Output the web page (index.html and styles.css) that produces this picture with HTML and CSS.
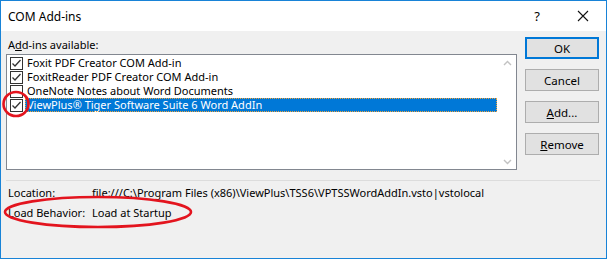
FILE: index.html
```html
<!DOCTYPE html>
<html lang="en">
<head>
  <meta charset="UTF-8" />
  <title>COM Add-ins</title>
  <link rel="stylesheet" href="styles.css" />
</head>
<body>

<div class="window">
  <!-- Title bar -->
  <div class="titlebar">
    <span class="title">COM Add-ins</span>
    <span class="caption-btn">?</span>
    <span class="caption-btn close">
      <svg width="12" height="12" viewBox="0 0 12 12"><path d="M1 1 L11 11 M11 1 L1 11" stroke="#111" stroke-width="1.1" fill="none"/></svg>
    </span>
  </div>

  <div class="content">
    <div class="left">
      <div class="label">A<u>d</u>d-ins available:</div>
      <div class="listbox">
        <div class="rows">
          <div class="row">
            <span class="check checked"></span>
            <span class="name">Foxit PDF Creator COM Add-in</span>
          </div>
          <div class="row">
            <span class="check checked"></span>
            <span class="name">FoxitReader PDF Creator COM Add-in</span>
          </div>
          <div class="row">
            <span class="check"></span>
            <span class="name">OneNote Notes about Word Documents</span>
          </div>
          <div class="row">
            <span class="check checked"></span>
            <span class="name selected">ViewPlus® Tiger Software Suite 6 Word AddIn</span>
          </div>
        </div>
        <div class="scrollbar">
          <svg width="9" height="6" viewBox="0 0 9 6"><path d="M1 5 L4.5 1.5 L8 5" stroke="#c2c2c2" stroke-width="1.4" fill="none"/></svg>
          <svg width="9" height="6" viewBox="0 0 9 6"><path d="M1 1 L4.5 4.5 L8 1" stroke="#c2c2c2" stroke-width="1.4" fill="none"/></svg>
        </div>
      </div>
    </div>

    <div class="buttons">
      <button class="btn default">OK</button>
      <button class="btn">Cancel</button>
      <button class="btn"><u>A</u>dd...</button>
      <button class="btn"><u>R</u>emove</button>
    </div>
  </div>

  <div class="separator"></div>

  <div class="details">
    <span>Location:</span>
    <span>file:///C:\Program Files (x86)\ViewPlus\TSS6\VPTSSWordAddIn.vsto|vstolocal</span>
    <span>Load Behavior:</span>
    <span>Load at Startup</span>
  </div>

  <!-- red annotation circles drawn over the dialog -->
  <svg class="marks" width="607" height="259" viewBox="0 0 607 259">
    <ellipse cx="16" cy="104" rx="12.5" ry="12" stroke="#e3141e" stroke-width="2.6" fill="none"/>
    <ellipse cx="98" cy="212" rx="93" ry="15" stroke="#e3141e" stroke-width="2.6" fill="none"/>
  </svg>
</div>

</body>
</html>
```

FILE: styles.css
```css
* {
  margin: 0;
  padding: 0;
  box-sizing: border-box;
}

body {
  font-family: "Segoe UI", "Noto Sans", "DejaVu Sans", sans-serif;
  font-size: 11px;
  color: #000;
  background: #fff;
}

.window {
  position: relative;
  width: 607px;
  height: 259px;
  border: 1px solid #1883d7;
  background: #f0f0f0;
  display: flex;
  flex-direction: column;
}

/* Title bar */
.titlebar {
  height: 30px;
  background: #fff;
  display: flex;
  align-items: center;
  padding-left: 7px;
}

.title {
  flex: 1;
  font-size: 12px;
}

.caption-btn {
  width: 46px;
  height: 30px;
  display: flex;
  align-items: center;
  justify-content: center;
  font-size: 13px;
}

/* Main area */
.content {
  display: flex;
  gap: 8px;
  padding: 6px 0 0 5px;
}

.left {
  width: 511px;
}

.label {
  height: 17px;
  line-height: 16px;
  padding-left: 2px;
}

.label u,
.btn u {
  text-decoration: underline;
}

.listbox {
  height: 116px;
  background: #fff;
  border: 1px solid #828790;
  display: flex;
}

.rows {
  flex: 1;
  padding: 1px 2px 0 2px;
}

.row {
  height: 14px;
  line-height: 14px;
  display: flex;
  align-items: center;
}

.check {
  width: 13px;
  height: 13px;
  border: 1px solid #333;
  background: #fff;
  margin-left: 1px;
  margin-right: 2px;
  flex-shrink: 0;
}

.check.checked {
  background: #fff url("data:image/svg+xml,%3Csvg xmlns='http://www.w3.org/2000/svg' width='11' height='11' viewBox='0 0 11 11'%3E%3Cpath d='M1.5 5.5 L4 8 L9.5 2' stroke='%23333' stroke-width='1.3' fill='none'/%3E%3C/svg%3E") no-repeat center;
}

.name {
  flex: 1;
  height: 14px;
  line-height: 13px;
  padding-left: 2px;
  white-space: nowrap;
  overflow: hidden;
}

.name.selected {
  background: #0078d7;
  color: #fff;
  outline: 1px dotted #f0a33c;
  outline-offset: -1px;
}

.scrollbar {
  width: 17px;
  display: flex;
  flex-direction: column;
  justify-content: space-between;
  align-items: center;
  padding: 5px 0 4px;
}

/* Buttons */
.buttons {
  display: flex;
  flex-direction: column;
  gap: 10px;
  width: 74px;
}

.btn {
  height: 22px;
  font-family: inherit;
  font-size: 11.5px;
  background: #e1e1e1;
  border: 1px solid #adadad;
  color: #000;
}

.btn.default {
  border: 2px solid #0078d7;
}

.separator {
  height: 1px;
  background: #dcdcdc;
  margin: 10px 6px 0 5px;
}

.details {
  display: grid;
  grid-template-columns: 84px 1fr;
  grid-auto-rows: 20px;
  align-items: center;
  padding: 1px 0 0 7px;
  white-space: nowrap;
}

.marks {
  position: absolute;
  left: -1px;
  top: -1px;
  pointer-events: none;
}
```
